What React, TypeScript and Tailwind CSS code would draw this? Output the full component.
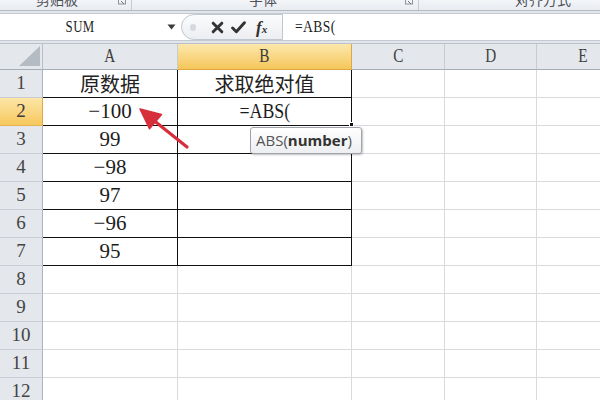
import React from 'react';

function Launcher({ className }: { className?: string }) {
  return (
    <svg className={className} width="9" height="9" viewBox="0 0 9 9">
      <rect x="0.5" y="-3" width="7" height="7" fill="none" stroke="#8d949e" strokeWidth="1" />
      <path d="M3 1 L6 4" stroke="#6d747e" strokeWidth="1" />
    </svg>
  );
}

export default function App() {
  const aVals = ['原数据', '−100', '99', '−98', '97', '−96', '95'];
  const rows = Array.from({ length: 12 }, (_, i) => i + 1);
  const cols = [
    { k: 'A', w: 'w-[135px]' },
    { k: 'B', w: 'w-[174px]' },
    { k: 'C', w: 'w-[93px]' },
    { k: 'D', w: 'w-[92px]' },
    { k: 'E', w: 'w-[92px]' },
  ];
  return (
    <div className="relative w-[600px] h-[400px] overflow-hidden bg-white font-['Liberation_Serif','Noto_Sans_CJK_SC',serif] text-[#1e1e1e]">
      {/* ribbon group labels (cut off) */}
      <div className="flex h-[11px] overflow-hidden border-b border-[#b3bac4] bg-linear-to-b from-[#f3f5f8] to-[#e8ebf0] font-['Noto_Sans_CJK_SC',sans-serif] text-[14px] leading-[14px] text-[#4b5059]">
        <div className="flex w-[132px] shrink-0 items-start border-r border-[#c6ccd4]">
          <span className="mt-[-8px] ml-[36px]">剪贴板</span>
          <Launcher className="ml-auto mr-[4px]" />
        </div>
        <div className="flex w-[287px] shrink-0 items-start border-r border-[#c6ccd4]">
          <span className="mt-[-8px] ml-[117px]">字体</span>
          <Launcher className="ml-auto mr-[4px]" />
        </div>
        <div className="flex flex-1 items-start">
          <span className="mt-[-8px] ml-[96px]">对齐方式</span>
        </div>
      </div>
      <div className="h-[2px] bg-[#e2e6eb]" />
      {/* formula bar */}
      <div className="flex h-[27px] border-t border-[#c4cad2] bg-white">
        <div className="flex w-[181px] shrink-0 items-center">
          <div className="flex w-[160px] justify-center">
            <span className="inline-block scale-x-80 text-[16px] tracking-[0.5px] text-[#1e1e1e]">SUM</span>
          </div>
          <svg width="9" height="6" viewBox="0 0 9 6" className="ml-[7px]">
            <path d="M0.5 0.5 H8.5 L4.5 5.5 Z" fill="#3a3a3a" />
          </svg>
        </div>
        <div className="flex w-[102px] shrink-0 items-center rounded-l-[14px] border border-[#c1c7cf] bg-linear-to-b from-[#fbfcfd] to-[#eceef2]">
          <div className="ml-[8px] h-[7px] w-[6px] rounded-full bg-[#d5d9df]" />
          <svg width="13" height="13" viewBox="0 0 12 12" className="ml-[15px]">
            <path d="M2 2 L10 10 M10 2 L2 10" stroke="#333" strokeWidth="2.7" strokeLinecap="round" />
          </svg>
          <svg width="15" height="13" viewBox="0 0 14 12" className="ml-[7px]">
            <path d="M1.5 6.5 L5 10 L12.5 1.5" stroke="#333" strokeWidth="2.7" fill="none" strokeLinecap="round" strokeLinejoin="round" />
          </svg>
          <span className="ml-[10px] text-[17px] italic font-bold leading-none text-[#2e2e2e]">
            f<span className="text-[11px]">x</span>
          </span>
        </div>
        <div className="flex flex-1 items-center pl-[12px]">
          <span className="inline-block origin-left scale-x-80 text-[17px] tracking-[0.5px] text-[#1e1e1e]">=ABS(</span>
        </div>
      </div>
      <div className="h-[3px] border-t border-[#c4cad2] bg-[#e2e6eb]" />
      {/* column headers */}
      <div className="flex h-[27px] border-t border-[#b9c0c9]">
        <div className="flex w-[43px] shrink-0 items-end justify-end border-r border-b border-r-[#b7bec8] border-b-[#a3acb7] bg-[#e4e7eb] pb-[3px] pr-[2px]">
          <svg width="21" height="20" viewBox="0 0 21 20">
            <path d="M21 0 L21 20 L0 20 Z" fill="#b5bbc3" />
          </svg>
        </div>
        {cols.map((c) => (
          <div
            key={c.k}
            className={`${c.w} shrink-0 flex items-center justify-center border-r border-b text-[19px] ${
              c.k === 'B'
                ? 'bg-linear-to-b from-[#fce8ab] to-[#f5c658] border-r-[#dca84a] border-b-[#e0a73c] text-[#3a3a3a]'
                : 'bg-[#e4e7eb] border-r-[#c7ccd3] border-b-[#a3acb7] text-[#3f3f3f]'
            }`}
          >
            <span className="inline-block scale-x-80">{c.k}</span>
          </div>
        ))}
      </div>
      {/* rows */}
      {rows.map((r) => {
        const inT = r <= 7;
        return (
          <div key={r} className="flex h-[28px]">
            <div
              className={`w-[43px] shrink-0 flex items-center justify-center border-r border-b text-[19px] ${
                r === 2
                  ? 'bg-linear-to-b from-[#fce6a5] to-[#f6c85c] border-r-[#dfa844] border-b-[#e3b357] text-[#3a3a3a]'
                  : 'bg-[#e4e7eb] border-r-[#aab2bc] border-b-[#c9ced5] text-[#444]'
              }`}
            >
              {r}
            </div>
            <div
              className={`w-[135px] shrink-0 flex items-center justify-center border-r border-b ${
                inT ? 'border-[#111]' : 'border-[#d8dadd]'
              }`}
            >
              {r === 1 ? (
                <span className="font-['Noto_Sans_CJK_SC',sans-serif] text-[20px] text-[#222]">{aVals[0]}</span>
              ) : inT ? (
                <span className="text-[21px] text-[#1c1c1c]">{aVals[r - 1]}</span>
              ) : null}
            </div>
            <div
              className={`w-[174px] shrink-0 flex items-center justify-center border-r border-b ${
                inT ? 'border-[#111]' : 'border-[#d8dadd]'
              }`}
            >
              {r === 1 ? (
                <span className="font-['Noto_Sans_CJK_SC',sans-serif] text-[20px] text-[#222]">求取绝对值</span>
              ) : r === 2 ? (
                <span className="inline-block scale-x-85 text-[21px] text-[#1c1c1c]">=ABS(</span>
              ) : null}
            </div>
            <div className="w-[93px] shrink-0 border-r border-b border-[#d8dadd]" />
            <div className="w-[92px] shrink-0 border-r border-b border-[#d8dadd]" />
            <div className="w-[92px] shrink-0 border-r border-b border-[#d8dadd]" />
          </div>
        );
      })}
      {/* fill handle */}
      <div className="absolute left-[349px] top-[122px] h-[5px] w-[5px] border border-white bg-[#111]" />
      {/* tooltip */}
      <div className="absolute left-[250px] top-[127px] flex h-[27px] w-[112px] items-center rounded-[3px] border border-[#a0a4aa] bg-linear-to-b from-white to-[#eceef1] pl-[5px] font-['Open_Sans',sans-serif] text-[15px] text-[#555] shadow-[1px_1px_2px_rgba(0,0,0,0.25)]">
        ABS(<span className="font-bold text-[#333]">number</span>)
      </div>
      {/* red arrow */}
      <svg className="pointer-events-none absolute left-0 top-0" width="600" height="400" viewBox="0 0 600 400">
        <line x1="187" y1="147" x2="152" y2="119" stroke="#d62f3b" strokeWidth="3.2" strokeLinecap="round" />
        <path d="M140 109 L161.5 114.5 L149.5 128.8 Z" fill="#d62f3b" stroke="#d62f3b" strokeWidth="1.5" strokeLinejoin="round" />
      </svg>
    </div>
  );
}
